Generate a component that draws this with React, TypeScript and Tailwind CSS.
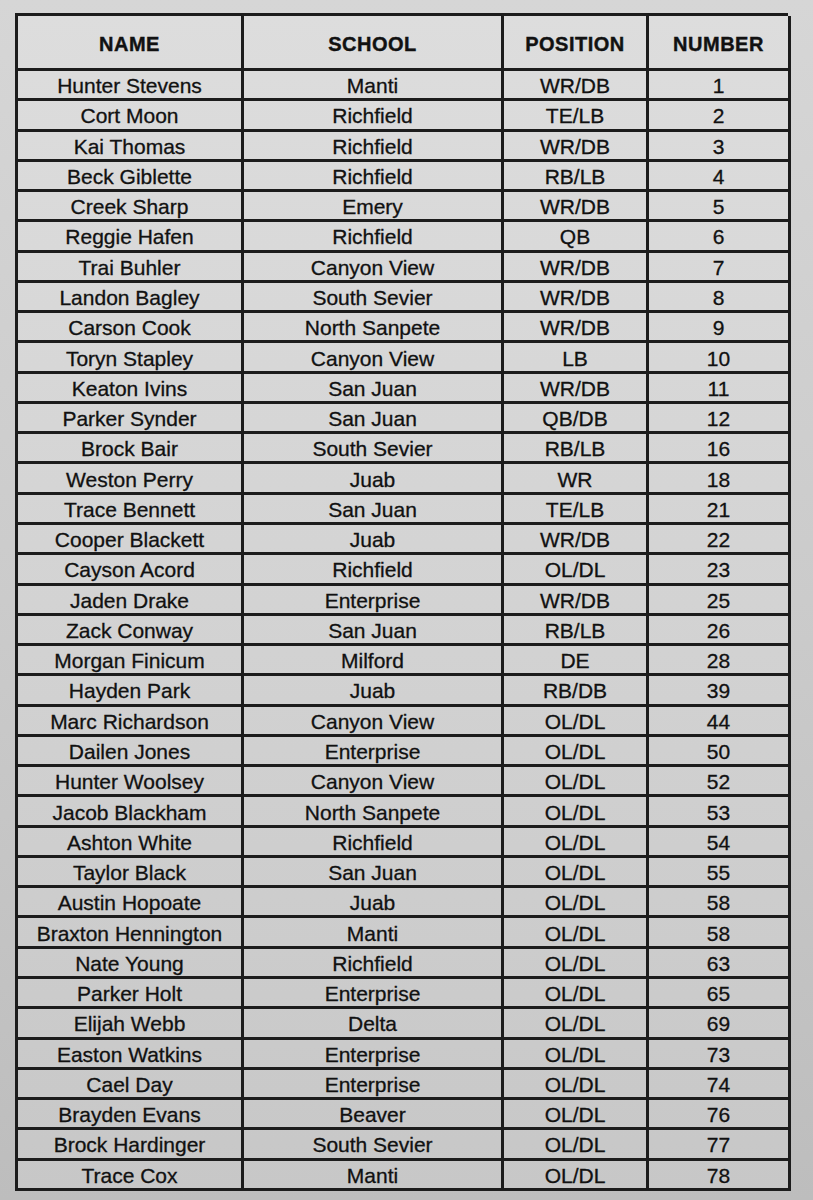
const rows: [string, string, string, number][] = [
  ['Hunter Stevens', 'Manti', 'WR/DB', 1],
  ['Cort Moon', 'Richfield', 'TE/LB', 2],
  ['Kai Thomas', 'Richfield', 'WR/DB', 3],
  ['Beck Giblette', 'Richfield', 'RB/LB', 4],
  ['Creek Sharp', 'Emery', 'WR/DB', 5],
  ['Reggie Hafen', 'Richfield', 'QB', 6],
  ['Trai Buhler', 'Canyon View', 'WR/DB', 7],
  ['Landon Bagley', 'South Sevier', 'WR/DB', 8],
  ['Carson Cook', 'North Sanpete', 'WR/DB', 9],
  ['Toryn Stapley', 'Canyon View', 'LB', 10],
  ['Keaton Ivins', 'San Juan', 'WR/DB', 11],
  ['Parker Synder', 'San Juan', 'QB/DB', 12],
  ['Brock Bair', 'South Sevier', 'RB/LB', 16],
  ['Weston Perry', 'Juab', 'WR', 18],
  ['Trace Bennett', 'San Juan', 'TE/LB', 21],
  ['Cooper Blackett', 'Juab', 'WR/DB', 22],
  ['Cayson Acord', 'Richfield', 'OL/DL', 23],
  ['Jaden Drake', 'Enterprise', 'WR/DB', 25],
  ['Zack Conway', 'San Juan', 'RB/LB', 26],
  ['Morgan Finicum', 'Milford', 'DE', 28],
  ['Hayden Park', 'Juab', 'RB/DB', 39],
  ['Marc Richardson', 'Canyon View', 'OL/DL', 44],
  ['Dailen Jones', 'Enterprise', 'OL/DL', 50],
  ['Hunter Woolsey', 'Canyon View', 'OL/DL', 52],
  ['Jacob Blackham', 'North Sanpete', 'OL/DL', 53],
  ['Ashton White', 'Richfield', 'OL/DL', 54],
  ['Taylor Black', 'San Juan', 'OL/DL', 55],
  ['Austin Hopoate', 'Juab', 'OL/DL', 58],
  ['Braxton Hennington', 'Manti', 'OL/DL', 58],
  ['Nate Young', 'Richfield', 'OL/DL', 63],
  ['Parker Holt', 'Enterprise', 'OL/DL', 65],
  ['Elijah Webb', 'Delta', 'OL/DL', 69],
  ['Easton Watkins', 'Enterprise', 'OL/DL', 73],
  ['Cael Day', 'Enterprise', 'OL/DL', 74],
  ['Brayden Evans', 'Beaver', 'OL/DL', 76],
  ['Brock Hardinger', 'South Sevier', 'OL/DL', 77],
  ['Trace Cox', 'Manti', 'OL/DL', 78],
]

const headers = ['NAME', 'SCHOOL', 'POSITION', 'NUMBER']

export default function App() {
  return (
    <div className="w-[813px] h-[1200px] overflow-hidden bg-gradient-to-b from-[#d6d6d6] via-[#cbcbcb] to-[#bdbdbd] pt-[13px] pl-[15px] font-['Liberation_Sans',Arial,sans-serif] text-[#111]">
      <div className="grid w-[773px] grid-cols-[226px_260px_145px_142px] grid-rows-[55px_repeat(37,30.27px)] border-l-[3px] border-t-[3px] border-[#1c1c1c] bg-gradient-to-b from-[#dddddd] via-[#d3d3d3] to-[#c7c7c7]">
        {headers.map((h) => (
          <div
            key={h}
            className="flex items-center justify-center border-b-[3px] border-r-[3px] border-[#1c1c1c] pt-1 text-[20px] font-bold tracking-[0.5px] [-webkit-text-stroke:0.4px_#111]"
          >
            {h}
          </div>
        ))}
        {rows.map((r, i) =>
          r.map((c, j) => (
            <div
              key={`${i}-${j}`}
              className="flex items-center justify-center border-b-[3px] border-r-[3px] border-[#1c1c1c] pt-[2px] text-[21px] leading-none [-webkit-text-stroke:0.3px_#111]"
            >
              {c}
            </div>
          ))
        )}
      </div>
    </div>
  )
}
